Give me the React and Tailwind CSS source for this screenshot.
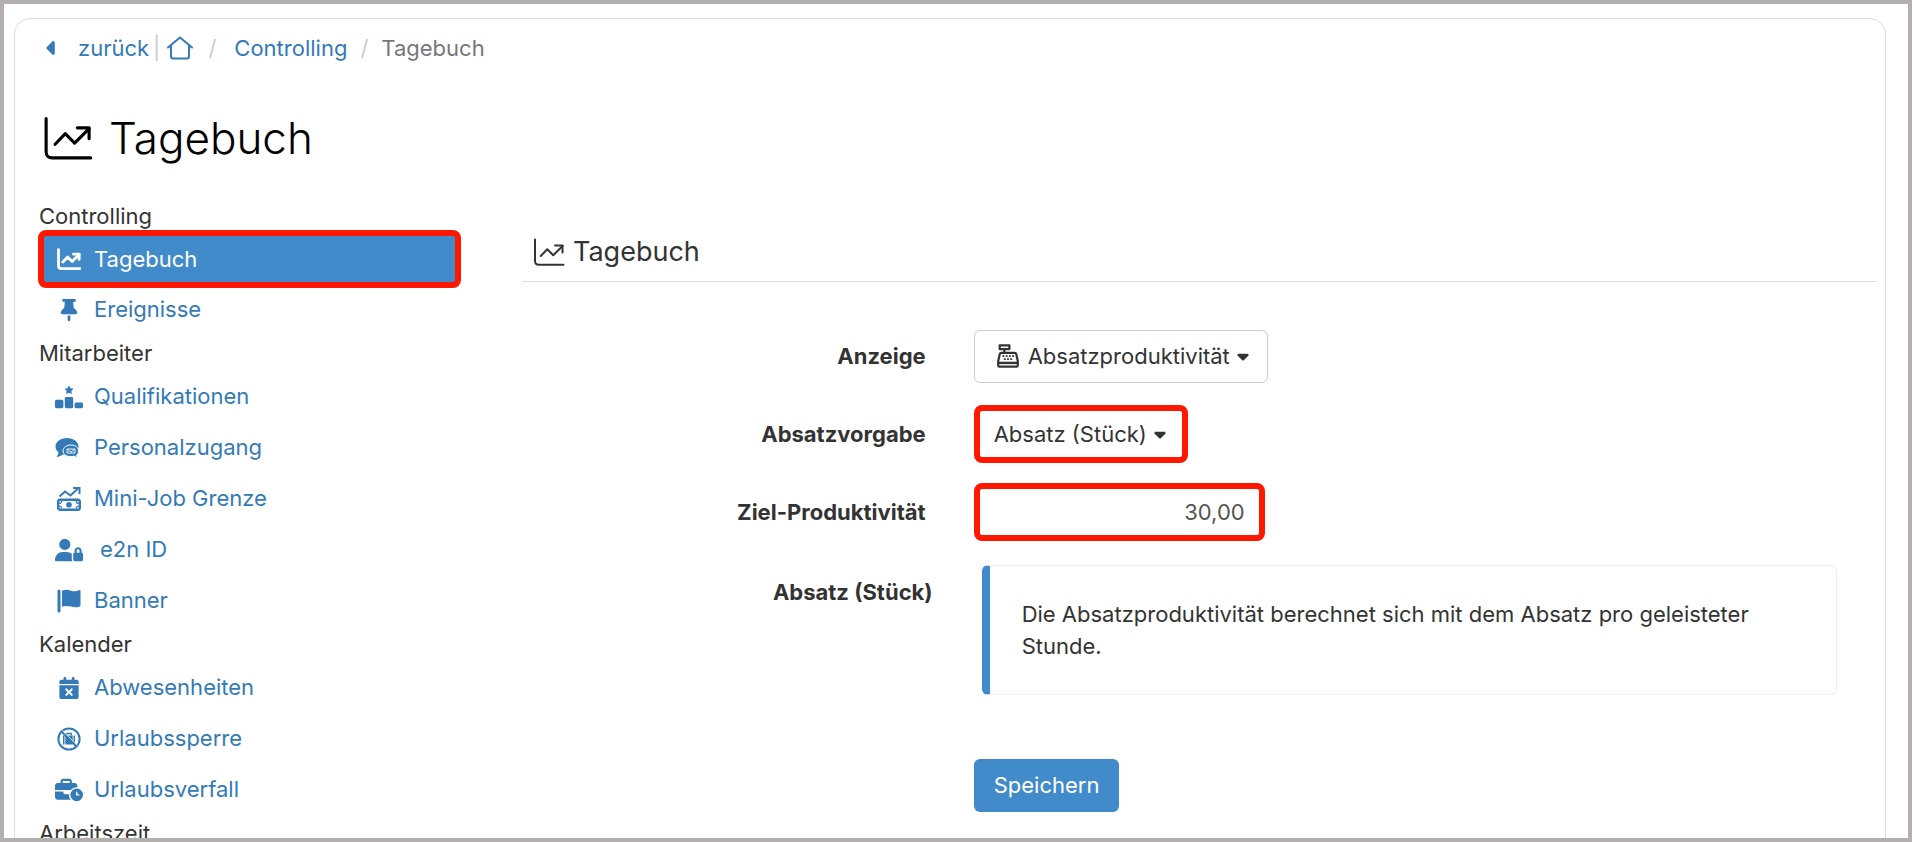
import { FaBusinessTime, FaCalendarXmark, FaCaretDown, FaCaretLeft, FaRankingStar, FaThumbtack, FaUserLock } from 'react-icons/fa6'

function ChartIcon({ className, stroke = 32 }) {
  return (
    <svg viewBox="0 0 512 512" className={className} fill="none" stroke="currentColor" strokeWidth={stroke} strokeLinecap="round" strokeLinejoin="round" aria-hidden="true">
      <path d="M32 56v344c0 35 25 60 60 60h396" />
      <path d="M124 320l104-108 96 96 148-148" />
      <path d="M352 152h120v112" />
    </svg>
  )
}

function HouseIcon({ className }) {
  return (
    <svg viewBox="0 0 27 24" className={className} fill="none" stroke="currentColor" strokeWidth="2" strokeLinecap="round" strokeLinejoin="round" aria-hidden="true">
      <path d="M1.500 11.500L13.500 1.500l12 10" />
      <path d="M4.500 9.500v11a2 2 0 0 0 2 2h14a2 2 0 0 0 2-2v-11" />
    </svg>
  )
}

function FlagIcon({ className }) {
  return (
    <svg viewBox="0 0 24 24" className={className} fill="currentColor" aria-hidden="true">
      <rect x="0.500" y="0.500" width="3" height="23" rx="1.500" />
      <path d="M5 1.700c3-1.500 6-1.300 9 0 3 1 5.500.8 8-.5.7-.3 1.500 0 1.500.9v14.100c0 .6-.3 1-.8 1.200-3 1.200-5.700 1-8.700.2-3-.9-6-.9-9 0z" />
    </svg>
  )
}

function ChatsIcon({ className }) {
  return (
    <svg viewBox="0 0 24 20" className={className} aria-hidden="true">
      <path fill="currentColor" d="M12 0c6.500 0 11.500 3.700 11.500 8.500S18.500 17 12 17c-1.600 0-3-.2-4.400-.6C6 17.700 3.800 18.800 1.500 18.800c1.200-1.200 1.800-2.800 1.900-4.500C1.500 12.800.5 10.800.5 8.500.5 3.700 5.500 0 12 0z" />
      <path fill="currentColor" stroke="white" strokeWidth="1" d="M16 7c4.500 0 7.600 2.600 7.600 6 0 1.600-.7 3-2 4 .1.900.5 1.600 1.200 2.300-1.500 0-2.900-.5-3.900-1.200-1 .3-1.900.5-3.100.5-4.500 0-7.700-2.300-7.700-5.600S11.500 7 16 7z" />
      <path fill="none" stroke="white" strokeWidth="0.900" d="M12 11h8v4h-8zM12.300 11.300l3.600 2.700 3.800-2.700" />
    </svg>
  )
}

function MoneyTrendIcon({ className }) {
  return (
    <svg viewBox="0 0 24 24" className={className} fill="none" stroke="currentColor" strokeWidth="2" aria-hidden="true">
      <path d="M2.500 9.500l5.500-5 5.500 4 8-7.500" />
      <path d="M16 1h6.500v6" />
      <rect x="1.200" y="12.700" width="21.600" height="10" rx="2" strokeWidth="2.400" />
      <circle cx="12" cy="17.700" r="2.800" fill="currentColor" stroke="none" />
      <path d="M2 16.500c1.600 0 2.700-1 2.700-2.600M22 16.500c-1.600 0-2.700-1-2.700-2.600M2 19c1.600 0 2.700 1 2.700 2.600M22 19c-1.600 0-2.700 1-2.700 2.600" strokeWidth="1.200" />
    </svg>
  )
}

function NoLuggageIcon({ className }) {
  return (
    <svg viewBox="0 0 24 24" className={className} fill="none" stroke="currentColor" aria-hidden="true">
      <circle cx="12" cy="12" r="10.600" strokeWidth="2" />
      <path fill="currentColor" stroke="none" d="M6 8.500h1.500v9H6zM8.300 8.500h7.400v9H8.300zM16.500 8.500H18v9h-1.500z" />
      <path d="M9.700 8.500v-2h4.600v2" strokeWidth="1.300" />
      <path d="M5.500 3.500l15 15" stroke="white" strokeWidth="0.800" />
      <path d="M4.500 4.500l15 15" strokeWidth="2" />
    </svg>
  )
}

function RegisterIcon({ className }) {
  return (
    <svg viewBox="0 0 24 26" className={className} fill="none" stroke="currentColor" strokeWidth="2.400" strokeLinejoin="round" aria-hidden="true">
      <path d="M3 1.500h10.500v4H3z" />
      <path d="M8 5.500v4" />
      <path d="M4.800 9.500h14.400c.9 0 1.500.5 1.700 1.300l1.700 7.700v4.700c0 .8-.6 1.300-1.300 1.300H2.700c-.7 0-1.300-.5-1.300-1.300v-4.700l1.700-7.700c.2-.8.800-1.300 1.700-1.300z" />
      <path d="M2 20.500h20" strokeWidth="2.600" />
      <path d="M6 13.200h12.500M7.500 16.500h10" strokeDasharray="2 1.500" strokeWidth="1.900" />
    </svg>
  )
}

const MENU = [
  {
    title: 'Controlling',
    items: [
      { label: 'Tagebuch', icon: <ChartIcon className="h-6 w-6" stroke={60} />, active: true },
      { label: 'Ereignisse', icon: <FaThumbtack className="h-[22px] w-[22px]" /> },
    ],
  },
  {
    title: 'Mitarbeiter',
    items: [
      { label: 'Qualifikationen', icon: <FaRankingStar className="h-7 w-7" /> },
      { label: 'Personalzugang', icon: <ChatsIcon className="mr-1 h-5 w-6" /> },
      { label: 'Mini-Job Grenze', icon: <MoneyTrendIcon className="h-6 w-6" /> },
      { label: 'e2n ID', icon: <FaUserLock className="h-7 w-7" />, indent: true },
      { label: 'Banner', icon: <FlagIcon className="h-6 w-6" /> },
    ],
  },
  {
    title: 'Kalender',
    items: [
      { label: 'Abwesenheiten', icon: <FaCalendarXmark className="h-[22px] w-[22px]" /> },
      { label: 'Urlaubssperre', icon: <NoLuggageIcon className="h-6 w-6" /> },
      { label: 'Urlaubsverfall', icon: <FaBusinessTime className="h-7 w-7" /> },
    ],
  },
  { title: 'Arbeitszeit', items: [] },
]

function Breadcrumb() {
  return (
    <nav aria-label="Breadcrumb" className="flex items-center pl-1 leading-8 text-[#337ab7]">
      <a href="#zurueck" className="flex items-center gap-4">
        <FaCaretLeft className="h-[22px] w-5" />
        zurück
      </a>
      <span className="pr-[6px] pl-1 text-[#cccccc]">|</span>
      <a href="#start" aria-label="Start">
        <HouseIcon className="h-6 w-7" />
      </a>
      <span className="pr-[18px] pl-[14px] text-[#cccccc]">/</span>
      <a href="#controlling">Controlling</a>
      <span className="px-[13px] text-[#cccccc]">/</span>
      <span className="text-[#777777]">Tagebuch</span>
    </nav>
  )
}

function Sidebar() {
  return (
    <nav aria-label="Menü">
      {MENU.map((group) => (
        <section key={group.title}>
          <h2 className="pl-px leading-9">{group.title}</h2>
          <ul>
            {group.items.map((item) => (
              <li key={item.label}>
                <a
                  href={`#${item.label}`}
                  className={
                    item.active
                      ? '-my-1 flex h-[58px] items-center rounded-lg border-6 border-[#ff1700] bg-[#428bca] pl-[11px] text-white'
                      : 'flex h-[51px] items-center pl-[17px] text-[#337ab7]'
                  }
                >
                  <span className={`flex w-7 justify-center ${item.indent ? 'mr-[17px]' : 'mr-[11px]'}`}>{item.icon}</span>
                  {item.label}
                </a>
              </li>
            ))}
          </ul>
        </section>
      ))}
    </nav>
  )
}

function FormRow({ label, htmlFor, children }) {
  return (
    <div className="grid min-h-[58px] grid-cols-[1fr_2fr] items-center">
      <label htmlFor={htmlFor} className="pr-12 text-right font-bold">
        {label}
      </label>
      <div className="flex">{children}</div>
    </div>
  )
}

export default function App() {
  return (
    <div className="h-screen overflow-hidden border-4 border-[#b3afae] bg-white pt-[14px] pr-[22px] pl-[10px] font-['Inter',sans-serif] text-[22px] text-[#333333]">
      <div className="min-h-full rounded-t-2xl border border-[#dddddd] pt-[13px] pr-2 pl-[23px]">
        <Breadcrumb />

        <h1 className="mt-[42px] flex items-center gap-4 pl-[5px] text-[44px] leading-16 font-light text-black">
          <ChartIcon className="h-[50px] w-[50px]" />
          Tagebuch
        </h1>

        <div className="mt-7 grid grid-cols-[23%_1fr] gap-x-[61px]">
          <Sidebar />

          <main className="pt-9">
            <h2 className="flex items-center gap-2 border-b border-[#dddddd] pb-[11px] pl-[11px] text-[27px] leading-9">
              <ChartIcon className="h-8 w-8" stroke={32} />
              Tagebuch
            </h2>

            <form className="mt-[45px] flex flex-col gap-5" onSubmit={(e) => e.preventDefault()}>
              <FormRow label="Anzeige" htmlFor="anzeige">
                <div className="flex h-[53px] items-center rounded-md border border-[#cccccc] pr-4 pl-[21px]">
                  <RegisterIcon className="mr-2 h-6 w-6" />
                  <select id="anzeige" className="appearance-none bg-transparent">
                    <option>Absatzproduktivität</option>
                  </select>
                  <FaCaretDown className="pointer-events-none ml-1 h-[18px] w-4" />
                </div>
              </FormRow>

              <FormRow label="Absatzvorgabe" htmlFor="vorgabe">
                <div className="flex h-[58px] items-center rounded-lg border-6 border-[#ff1700] pr-[14px] pl-[14px]">
                  <select id="vorgabe" className="appearance-none bg-transparent">
                    <option>Absatz (Stück)</option>
                  </select>
                  <FaCaretDown className="pointer-events-none ml-1 h-[18px] w-4" />
                </div>
              </FormRow>

              <FormRow label="Ziel-Produktivität" htmlFor="ziel">
                <input
                  id="ziel"
                  type="text"
                  defaultValue="30,00"
                  className="h-[58px] w-[291px] rounded-lg border-6 border-[#ff1700] pr-[14px] text-right text-[#555555]"
                />
              </FormRow>

              <div className="mt-1 grid grid-cols-[1fr_2fr]">
                <h3 className="pt-[11px] pr-[41px] text-right leading-8 font-bold">Absatz (Stück)</h3>
                <p className="mr-10 ml-2 rounded-md border border-l-8 border-[#eeeeee] border-l-[#428bca] px-8 py-8 leading-8">
                  Die Absatzproduktivität berechnet sich mit dem Absatz pro geleisteter Stunde.
                </p>
              </div>

              <div className="mt-11 grid grid-cols-[1fr_2fr]">
                <button type="submit" className="col-start-2 h-[53px] justify-self-start rounded-md bg-[#428bca] px-5 text-white">
                  Speichern
                </button>
              </div>
            </form>
          </main>
        </div>
      </div>
    </div>
  )
}
